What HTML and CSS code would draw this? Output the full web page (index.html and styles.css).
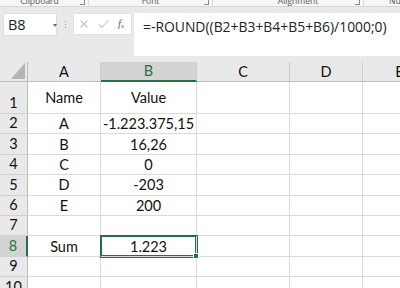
FILE: index.html
```html
<!DOCTYPE html>
<html>
<head>
<meta charset="utf-8">
<link rel="stylesheet" href="styles.css">
</head>
<body>
<div class="ribbon">
  <div class="group g-clip"><span class="glabel">Clipboard</span><span class="launch"></span></div>
  <div class="group g-font"><span class="glabel">Font</span><span class="launch"></span></div>
  <div class="group g-align"><span class="glabel">Alignment</span><span class="launch"></span></div>
  <div class="group g-num"><span class="glabel">Number</span></div>
</div>
<div class="fbar">
  <div class="namebox"><span class="nb-text">B8</span><span class="nb-arrow"></span></div>
  <div class="dots"><i></i><i></i><i></i></div>
  <div class="fnbox">
    <svg class="ic" width="10" height="10" viewBox="0 0 10 10"><path d="M1.5 1.5 L8.5 8.5 M8.5 1.5 L1.5 8.5" stroke="#c4c4c4" stroke-width="1.1" fill="none"/></svg>
    <svg class="ic" width="11" height="10" viewBox="0 0 11 10"><path d="M1 5.5 L4 8.5 L10 1.5" stroke="#c4c4c4" stroke-width="1.1" fill="none"/></svg>
    <span class="fx">f<sub>x</sub></span>
  </div>
  <div class="formula">=-ROUND((B2+B3+B4+B5+B6)/1000;0)</div>
</div>
<div class="sheetwrap">
<div class="sheet">
  <div class="corner"><span class="tri"></span></div>
  <div class="ch">A</div>
  <div class="ch sel">B</div>
  <div class="ch">C</div>
  <div class="ch">D</div>
  <div class="ch last">E</div>

  <div class="rh tall">1</div><div class="c tall">Name</div><div class="c tall">Value</div><div class="c tall"></div><div class="c tall"></div><div class="c tall"></div>
  <div class="rh">2</div><div class="c">A</div><div class="c">-1.223.375,15</div><div class="c"></div><div class="c"></div><div class="c"></div>
  <div class="rh">3</div><div class="c">B</div><div class="c">16,26</div><div class="c"></div><div class="c"></div><div class="c"></div>
  <div class="rh">4</div><div class="c">C</div><div class="c">0</div><div class="c"></div><div class="c"></div><div class="c"></div>
  <div class="rh">5</div><div class="c">D</div><div class="c">-203</div><div class="c"></div><div class="c"></div><div class="c"></div>
  <div class="rh">6</div><div class="c">E</div><div class="c">200</div><div class="c"></div><div class="c"></div><div class="c"></div>
  <div class="rh">7</div><div class="c"></div><div class="c"></div><div class="c"></div><div class="c"></div><div class="c"></div>
  <div class="rh selr">8</div><div class="c">Sum</div><div class="c active">1.223<span class="handle"></span></div><div class="c"></div><div class="c"></div><div class="c"></div>
  <div class="rh">9</div><div class="c"></div><div class="c"></div><div class="c"></div><div class="c"></div><div class="c"></div>
  <div class="rh">10</div><div class="c"></div><div class="c"></div><div class="c"></div><div class="c"></div><div class="c"></div>
</div>
</div>
</body>
</html>
```
FILE: styles.css
```css
html, body {
  margin: 0;
  padding: 0;
  width: 400px;
  height: 288px;
  overflow: hidden;
  background: #ffffff;
}
body {
  font-family: "Open Sans", sans-serif;
}
.ribbon {
  display: flex;
  height: 6px;
  background: #f6f6f6;
  border-bottom: 1px solid #d6d6d6;
  overflow: hidden;
}
.group {
  position: relative;
  height: 6px;
  display: flex;
  justify-content: center;
  border-right: 1px solid #dcdcdc;
  box-sizing: border-box;
}
.g-clip { width: 89px; }
.g-font { width: 124px; }
.g-align { width: 151px; }
.g-num { flex: 1; border-right: none; justify-content: flex-start; padding-left: 25px; overflow: hidden; }
.g-clip .glabel { margin-left: -9px; }
.g-font .glabel { margin-left: 0; }
.g-align .glabel { margin-left: 20px; }
.glabel {
  font-size: 8.5px;
  line-height: 8px;
  margin-top: -3px;
  color: #555555;
  white-space: nowrap;
}
.launch {
  position: absolute;
  right: 3px;
  top: 0px;
  width: 4px;
  height: 4px;
  border-right: 1px solid #8a8a8a;
  border-bottom: 1px solid #8a8a8a;
}
.fbar {
  display: flex;
  align-items: flex-start;
  height: 55px;
  background: #e9e9e9;
  padding-top: 6px;
  box-sizing: border-box;
}
.namebox {
  margin-left: 3px;
  width: 54px;
  height: 23px;
  background: #ffffff;
  border: 1px solid #dedede;
  box-sizing: border-box;
  display: flex;
  align-items: center;
  position: relative;
}
.nb-text {
  font-size: 14.5px;
  color: #222222;
  margin-left: 4px;
  line-height: 20px;
}
.nb-arrow {
  position: absolute;
  left: 49px;
  top: 10px;
  width: 0;
  height: 0;
  border-left: 2.5px solid transparent;
  border-right: 2.5px solid transparent;
  border-top: 3px solid #666666;
}
.dots {
  width: 16px;
  height: 23px;
  display: flex;
  flex-direction: column;
  align-items: center;
  justify-content: center;
  gap: 2px;
}
.dots i {
  display: block;
  width: 1px;
  height: 1px;
  background: #9a9a9a;
}
.fnbox {
  width: 59px;
  height: 22px;
  background: #ffffff;
  border: 1px solid #e2e2e2;
  box-sizing: border-box;
  display: flex;
  align-items: center;
  padding-left: 5px;
  gap: 9px;
}
.fx {
  font-family: "Liberation Serif", serif;
  font-style: italic;
  font-size: 11px;
  color: #666666;
  line-height: 12px;
}
.fx sub {
  font-size: 7px;
  vertical-align: -1px;
}
.formula {
  margin-left: 2px;
  flex: 1;
  height: 43px;
  background: #ffffff;
  box-sizing: border-box;
  padding-left: 9px;
  padding-top: 4px;
  font-size: 13.9px;
  line-height: 20px;
  color: #222222;
  white-space: nowrap;
}
.sheetwrap {
  width: 400px;
  overflow: hidden;
}
.sheet {
  display: grid;
  width: 436px;
  grid-template-columns: 28px 73px 96px 93px 73px 73px;
  grid-template-rows: 20px 32px repeat(9, 20.4px);
  font-family: "Lato", sans-serif;
  font-size: 14.5px;
  color: #111111;
  background: #e9e9e9;
}
.corner {
  background: #e9e9e9;
  border-right: 1px solid #bdbdbd;
  border-bottom: 1px solid #bdbdbd;
  position: relative;
}
.tri {
  position: absolute;
  right: 2px;
  bottom: 2px;
  width: 0;
  height: 0;
  border-left: 14px solid transparent;
  border-bottom: 16px solid #b4b4b4;
}
.ch {
  background: #e9e9e9;
  border-right: 1px solid #cdcdcd;
  border-bottom: 1px solid #bdbdbd;
  display: flex;
  align-items: center;
  justify-content: center;
  line-height: 18px;
}
.ch.last { border-right: none; }
.ch.sel {
  background: #d3d3d3;
  color: #217346;
  border-bottom: 2px solid #217346;
}
.rh {
  background: #e9e9e9;
  border-right: 1px solid #bdbdbd;
  border-bottom: 1px solid #d0d0d0;
  display: flex;
  align-items: flex-end;
  justify-content: center;
  padding-bottom: 1px;
  line-height: 18px;
}
.rh.selr {
  background: #d3d3d3;
  color: #217346;
  border-right: 2px solid #217346;
}
.c {
  background: #ffffff;
  border-right: 1px solid #dadada;
  border-bottom: 1px solid #dadada;
  display: flex;
  align-items: center;
  justify-content: center;
  line-height: 18px;
  padding-top: 1px;
  white-space: nowrap;
}
.c.tall { padding-top: 0; }
.c.active {
  position: relative;
  box-shadow: inset 0 0 0 1px #217346, 0 0 0 1px #217346;
  z-index: 1;
}
.handle {
  position: absolute;
  right: -3px;
  bottom: -3px;
  width: 4px;
  height: 4px;
  background: #217346;
  border: 1px solid #ffffff;
}
```
